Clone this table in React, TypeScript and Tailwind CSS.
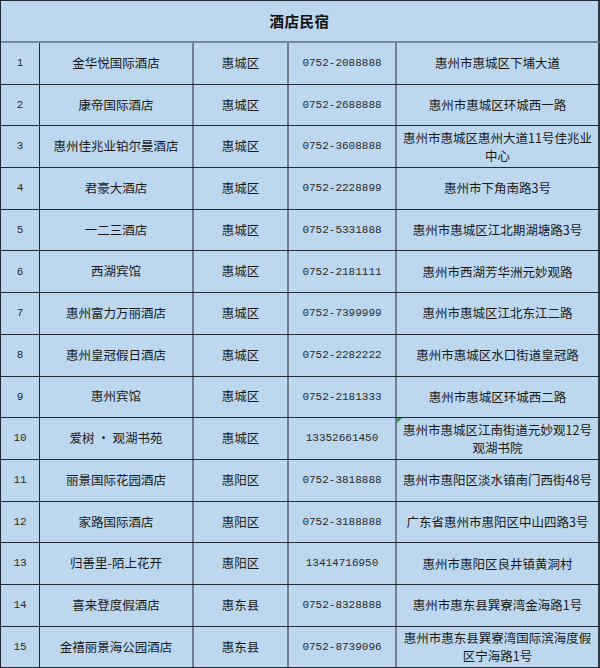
import React from 'react';

type Row = {
  no: number;
  name: string;
  area: string;
  phone: string;
  address: string[];
  flag?: boolean;
};

const rows: Row[] = [
  { no: 1, name: '金华悦国际酒店', area: '惠城区', phone: '0752-2088888', address: ['惠州市惠城区下埔大道'] },
  { no: 2, name: '康帝国际酒店', area: '惠城区', phone: '0752-2688888', address: ['惠州市惠城区环城西一路'] },
  { no: 3, name: '惠州佳兆业铂尔曼酒店', area: '惠城区', phone: '0752-3608888', address: ['惠州市惠城区惠州大道11号佳兆业', '中心'] },
  { no: 4, name: '君豪大酒店', area: '惠城区', phone: '0752-2228899', address: ['惠州市下角南路3号'] },
  { no: 5, name: '一二三酒店', area: '惠城区', phone: '0752-5331888', address: ['惠州市惠城区江北期湖塘路3号'] },
  { no: 6, name: '西湖宾馆', area: '惠城区', phone: '0752-2181111', address: ['惠州市西湖芳华洲元妙观路'] },
  { no: 7, name: '惠州富力万丽酒店', area: '惠城区', phone: '0752-7399999', address: ['惠州市惠城区江北东江二路'] },
  { no: 8, name: '惠州皇冠假日酒店', area: '惠城区', phone: '0752-2282222', address: ['惠州市惠城区水口街道皇冠路'] },
  { no: 9, name: '惠州宾馆', area: '惠城区', phone: '0752-2181333', address: ['惠州市惠城区环城西二路'] },
  { no: 10, name: '爱树 · 观湖书苑', area: '惠城区', phone: '13352661450', address: ['惠州市惠城区江南街道元妙观12号', '观湖书院'], flag: true },
  { no: 11, name: '丽景国际花园酒店', area: '惠阳区', phone: '0752-3818888', address: ['惠州市惠阳区淡水镇南门西街48号'] },
  { no: 12, name: '家路国际酒店', area: '惠阳区', phone: '0752-3188888', address: ['广东省惠州市惠阳区中山四路3号'] },
  { no: 13, name: '归善里-陌上花开', area: '惠阳区', phone: '13414716950', address: ['惠州市惠阳区良井镇黄洞村'] },
  { no: 14, name: '喜来登度假酒店', area: '惠东县', phone: '0752-8328888', address: ['惠州市惠东县巽寮湾金海路1号'] },
  { no: 15, name: '金禧丽景海公园酒店', area: '惠东县', phone: '0752-8739096', address: ['惠州市惠东县巽寮湾国际滨海度假', '区宁海路1号'] },
];

const cjk = "font-['Noto_Sans_CJK_SC',sans-serif] text-[12.5px] text-[#1a1a1a]";
const mono = "font-['Liberation_Mono','Noto_Sans_CJK_SC',monospace] text-[11px] text-[#2b2b2b]";

export default function App() {
  return (
    <div className="w-[600px] h-[668px] overflow-hidden bg-[#bdd7ee] border-l border-t border-[#1f2a36]">
      {/* Title */}
      <div className="h-[42px] flex items-center justify-center border-b-2 border-b-[#74869a] border-r-2 border-r-[#2f3b47]">
        <span className="font-['Noto_Sans_CJK_SC',sans-serif] text-[14.5px] font-bold text-[#111] tracking-[0.5px]">
          酒店民宿
        </span>
      </div>

      {rows.map((r) => (
        <div
          key={r.no}
          className="grid grid-cols-[39px_154px_95px_108px_203px] h-[41.7px] border-b border-[#1f2a36]"
        >
          <div className={`flex items-center justify-center border-r border-[#1f2a36] ${mono}`}>{r.no}</div>
          <div className={`flex items-center justify-center border-r-2 border-[#6c7e90] whitespace-nowrap ${cjk}`}>
            {r.name}
          </div>
          <div className={`flex items-center justify-center border-r-2 border-[#6c7e90] ${cjk}`}>{r.area}</div>
          <div className={`flex items-center justify-center border-r-2 border-[#6c7e90] ${mono}`}>{r.phone}</div>
          <div
            className={`relative flex flex-col items-center justify-center border-r-2 border-[#2f3b47] leading-[18px] whitespace-nowrap ${cjk}`}
          >
            {r.flag && (
              <div className="absolute left-0 top-0 w-0 h-0 border-t-[5px] border-t-[#2e9b3e] border-r-[5px] border-r-transparent" />
            )}
            {r.address.map((line) => (
              <span key={line} className="block h-[18px]">
                {line}
              </span>
            ))}
          </div>
        </div>
      ))}
    </div>
  );
}
